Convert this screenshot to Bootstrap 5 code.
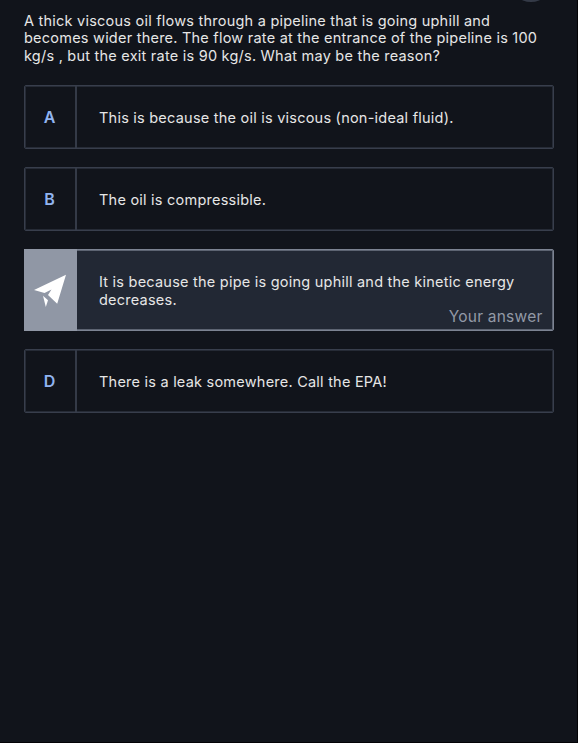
<!DOCTYPE html>
<html lang="en">
<head>
<meta charset="utf-8">
<meta name="viewport" content="width=device-width, initial-scale=1">
<title>Quiz question</title>
<link href="https://cdn.jsdelivr.net/npm/bootstrap@5.3.0/dist/css/bootstrap.min.css" rel="stylesheet">
<style>
body{background:#11141b;color:#e6e6e6;font-family:Inter,"Liberation Sans",sans-serif;font-size:14.5px;line-height:17.6px;letter-spacing:.23px}
.quiz{height:743px;padding:11.5px 24px 0;border-right:1px solid #030306;border-bottom:1px solid #030306}
.prompt{height:73px;white-space:nowrap}
.answers{gap:18px;width:530px}
.answer{border:1px solid #383e4c;box-shadow:inset 0 0 0 1px #262b36;border-radius:2px;height:64.3px}
.answer-key{width:52px;padding-right:1px;padding-top:2px;border-right:2px solid #343a47;color:#91b4f0;font-size:16px;font-weight:600;letter-spacing:0}
.answer-text{padding-left:22px;padding-top:2px;white-space:nowrap}
.answer.chosen{height:82px;background:#222834;border-color:#7c8392;box-shadow:inset 0 0 0 1px #5d6472}
.chosen .answer-key{background:#9097a5;border-color:#9097a5;margin:-1px 0 -1px -1px;padding:0 0 0 1px;width:53px}
.chosen .answer-text{padding-top:1px}
.your-answer{right:10.5px;bottom:5px;color:#9299a6;font-size:15.5px}
.top-button{width:42px;height:42px;left:510px;top:-40px;background:#343a47}
</style>
</head>
<body>
<main class="quiz position-relative overflow-hidden">
<span class="top-button position-absolute rounded-circle"></span>
<div class="prompt">A thick viscous oil flows through a pipeline that is going uphill and<br>becomes wider there. The flow rate at the entrance of the pipeline is 100<br>kg/s , but the exit rate is 90 kg/s. What may be the reason?</div>
<div class="answers d-flex flex-column">
<div class="answer d-flex">
<div class="answer-key d-flex align-items-center justify-content-center">A</div>
<div class="answer-text d-flex align-items-center">This is because the oil is viscous (non-ideal fluid).</div>
</div>
<div class="answer d-flex">
<div class="answer-key d-flex align-items-center justify-content-center">B</div>
<div class="answer-text d-flex align-items-center">The oil is compressible.</div>
</div>
<div class="answer chosen d-flex position-relative">
<div class="answer-key d-flex align-items-center justify-content-center"><svg width="32" height="33" viewBox="0 0 32 33" fill="#fff" overflow="visible" aria-hidden="true"><path d="M0 16.1 32 .8 23.2 29.8 14 21.1 17.5 15.6 10.5 18.9Z"/><path d="M9 21.8 14 26.3 11.8 33.1Z"/></svg></div>
<div class="answer-text d-flex align-items-center">It is because the pipe is going uphill and the kinetic energy<br>decreases.</div>
<span class="your-answer position-absolute">Your answer</span>
</div>
<div class="answer d-flex">
<div class="answer-key d-flex align-items-center justify-content-center">D</div>
<div class="answer-text d-flex align-items-center">There is a leak somewhere. Call the EPA!</div>
</div>
</div>
</main>
<script src="https://cdn.jsdelivr.net/npm/bootstrap@5.3.0/dist/js/bootstrap.bundle.min.js"></script>
</body>
</html>
